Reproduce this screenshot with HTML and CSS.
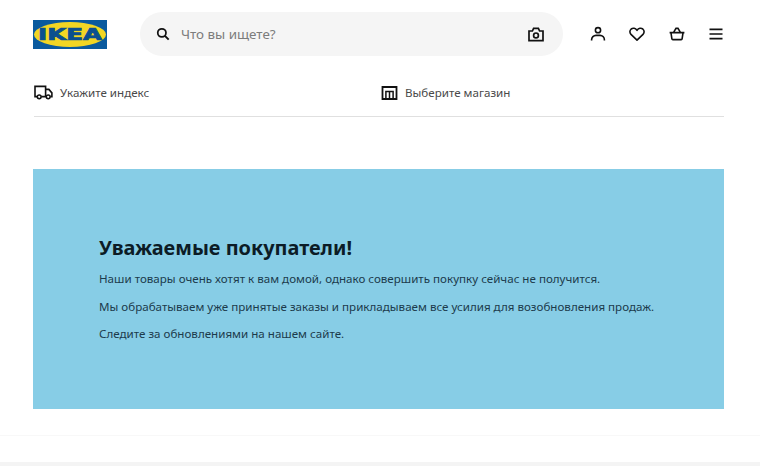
FILE: index.html
```html
<!DOCTYPE html>
<html lang="ru">
<head>
<meta charset="utf-8">
<title>IKEA</title>
<link rel="stylesheet" href="styles.css">
</head>
<body>
<div class="page">
  <header class="top">
    <svg class="logo" viewBox="0 0 74 29" aria-label="IKEA">
      <rect width="74" height="29" fill="#0a5a9e"/>
      <ellipse cx="37" cy="14.500" rx="36" ry="12.500" fill="#f2d624"/>
      <text class="logo-text" x="37" y="20" text-anchor="middle" textLength="64" lengthAdjust="spacingAndGlyphs">IKEA</text>
    </svg>
    <div class="search">
      <svg class="ico-search" viewBox="0 0 16 16"><circle cx="6.700" cy="6.700" r="4.700" fill="none" stroke="#111" stroke-width="2"/><path d="M10.200 10.200l4.300 4.300" stroke="#111" stroke-width="2.200" fill="none"/></svg>
      <span class="placeholder">Что вы ищете?</span>
      <svg class="ico-cam" viewBox="0 0 16 15"><path d="M1 4h3.400l1.200-2.600h4.800L11.600 4H15v9.600H1z" fill="none" stroke="#111" stroke-width="1.700"/><circle cx="8" cy="8.400" r="2.400" fill="none" stroke="#111" stroke-width="1.700"/></svg>
    </div>
    <nav class="icons">
      <svg class="ico" viewBox="0 0 16 16"><circle cx="8" cy="4.200" r="2.600" fill="none" stroke="#111" stroke-width="1.600"/><path d="M1.600 14.600v-.8a4.400 4.400 0 0 1 4.400-4.400h4a4.400 4.400 0 0 1 4.400 4.400v.8" fill="none" stroke="#111" stroke-width="1.600"/></svg>
      <svg class="ico" viewBox="0 0 16 16"><path d="M8 14.200L2 8.400C.4 6.700.6 4.300 2.200 3 3.900 1.700 6.400 2 8 4.400 9.600 2 12.100 1.700 13.800 3c1.600 1.300 1.800 3.700.2 5.400z" fill="none" stroke="#111" stroke-width="1.600" stroke-linejoin="round"/></svg>
      <svg class="ico" viewBox="0 0 16 16"><path d="M.6 6.600h14.800M2 6.800l.9 6.100c.1.500.4.700.9.700h8.400c.5 0 .8-.2.900-.7l.9-6.100M4.600 6.400L7 2.400h2l2.400 4" fill="none" stroke="#111" stroke-width="1.600"/></svg>
      <svg class="ico" viewBox="0 0 16 16"><path d="M1.500 3.400h13M1.500 8h13M1.500 12.600h13" fill="none" stroke="#111" stroke-width="1.700"/></svg>
    </nav>
  </header>

  <div class="sub">
    <div class="sub-left">
      <svg class="ico-truck" viewBox="0 0 19 15"><path d="M3.200 11.600H1V1.400h10.600v10.200H7.200M11.600 4.400h3.300l3 3.500v3.700h-1.600M11.600 11.600h.4" fill="none" stroke="#111" stroke-width="1.600"/><circle cx="5.200" cy="11.800" r="1.900" fill="none" stroke="#111" stroke-width="1.500"/><circle cx="14.200" cy="11.800" r="1.900" fill="none" stroke="#111" stroke-width="1.500"/></svg>
      <span>Укажите индекс</span>
    </div>
    <div class="sub-right">
      <svg class="ico-store" viewBox="0 0 16 14"><path d="M1 13V1h14v12z" fill="none" stroke="#111" stroke-width="1.800"/><path d="M4.400 13V5.600h7.200V13M8 5.600V13" fill="none" stroke="#111" stroke-width="1.500"/></svg>
      <span>Выберите магазин</span>
    </div>
  </div>

  <section class="banner">
    <h1>Уважаемые покупатели!</h1>
    <p>Наши товары очень хотят к вам домой, однако совершить покупку сейчас не получится.</p>
    <p>Мы обрабатываем уже принятые заказы и прикладываем все усилия для возобновления продаж.</p>
    <p>Следите за обновлениями на нашем сайте.</p>
  </section>

  <div class="foot-line"></div>
  <div class="foot-band"></div>
</div>
</body>
</html>
```

FILE: styles.css
```css
* { box-sizing: border-box; }
html, body { margin: 0; height: 100%; overflow: hidden; background: #fff; }
.page {
  width: 760px;
  height: 466px;
  font-family: "Noto Sans", "Open Sans", sans-serif;
  color: #111;
  display: flex;
  flex-direction: column;
}
.top {
  display: flex;
  align-items: center;
  height: 68px;
  padding: 0 36px 0 33px;
  flex: none;
}
.logo { width: 74px; height: 29px; flex: none; }
.logo-text {
  font-family: "DejaVu Sans", sans-serif;
  font-weight: 700;
  font-size: 15.500px;
  fill: #0a4f8f;
  stroke: #0a4f8f;
  stroke-width: .7px;
}
.search {
  margin-left: 33px;
  width: 423px;
  height: 44px;
  border-radius: 22px;
  background: #f5f5f5;
  display: flex;
  align-items: center;
  padding: 0 19px 0 16px;
}
.ico-search { width: 14px; height: 14px; flex: none; }
.placeholder { margin-left: 11px; font-size: 13.400px; color: #7c7c7c; flex: 1; }
.ico-cam { width: 16px; height: 15px; flex: none; }
.icons {
  display: flex;
  align-items: center;
  margin-left: 27px;
  gap: 23.500px;
}
.ico { width: 16px; height: 16px; display: block; }
.sub {
  display: flex;
  align-items: center;
  height: 49px;
  margin: 0 36px 0 34px;
  border-bottom: 1px solid #e0e0e0;
  font-size: 11.600px;
  color: #4a4a4a;
  flex: none;
  padding-top: 1px;
}
.sub-left { display: flex; align-items: center; width: 347px; gap: 7px; }
.sub-right { display: flex; align-items: center; gap: 7px; }
.ico-truck { width: 19px; height: 15px; flex: none; }
.ico-store { width: 17px; height: 14px; flex: none; }
.banner {
  margin: 52px 36px 0 33px;
  height: 240px;
  background: #87cde6;
  padding: 66px 0 0 66px;
  flex: none;
  color: #1c3b4c;
}
.banner h1 {
  margin: 0 0 9px;
  font-size: 19.900px;
  line-height: 26px;
  font-weight: 700;
  color: #0c1c26;
}
.banner p {
  margin: 0 0 10.500px;
  font-size: 11.600px;
  line-height: 17px;
}
.foot-line { margin-top: 26px; height: 1px; background: #f8f8f8; flex: none; }
.foot-band { margin-top: 26px; flex: 1; background: #f4f4f4; }
```
